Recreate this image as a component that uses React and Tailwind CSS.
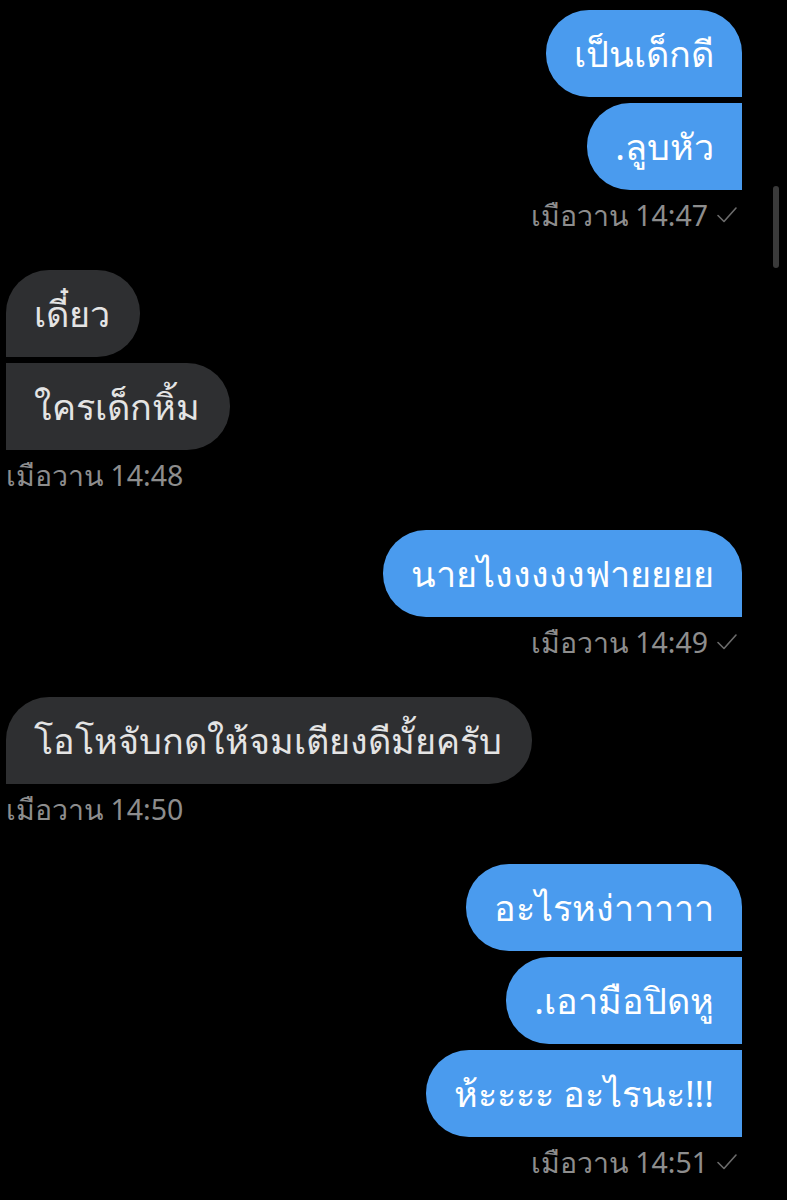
const groups = [
  { side: 'out', messages: ['เป็นเด็กดี', '.ลูบหัว'], time: 'เมือวาน 14:47' },
  { side: 'in', messages: ['เดี๋ยว', 'ใครเด็กหิ้ม'], time: 'เมือวาน 14:48' },
  { side: 'out', messages: ['นายไงงงงงฟายยยย'], time: 'เมือวาน 14:49' },
  { side: 'in', messages: ['โอโหจับกดให้จมเตียงดีมั้ยครับ'], time: 'เมือวาน 14:50' },
  { side: 'out', messages: ['อะไรหง่าาาาา', '.เอามือปิดหู', 'ห้ะะะะ อะไรนะ!!!'], time: 'เมือวาน 14:51' },
];

function Bubble({ side, text, first }) {
  // first bubble of a group keeps the rounded corner on the tail side
  const outShape = first ? 'rounded-l-[43px] rounded-tr-[43px]' : 'rounded-l-[43px]';
  const inShape = first ? 'rounded-r-[43px] rounded-tl-[43px]' : 'rounded-r-[43px]';
  return (
    <div
      className={
        side === 'out'
          ? `bg-[#4a9bee] text-white ${outShape} h-[87px] px-[28px] flex items-center`
          : `bg-[#2e2f31] text-[#e4e4e4] ${inShape} h-[87px] pl-[28px] pr-[30px] flex items-center`
      }
    >
      <span className="text-[36px] leading-none whitespace-nowrap">{text}</span>
    </div>
  );
}

function Check() {
  return (
    <svg width="22" height="18" viewBox="0 0 22 18" fill="none">
      <path d="M2 9.5 L8 15.5 L20 2" stroke="#6b6b6b" strokeWidth="1.6" strokeLinecap="round" strokeLinejoin="round" />
    </svg>
  );
}

export default function App() {
  return (
    <div
      className="relative bg-black min-h-[1200px] w-[787px] overflow-hidden pt-[10px]"
      style={{ fontFamily: '"Noto Sans", "DejaVu Sans", sans-serif' }}
    >
      {/* Scroll indicator */}
      <div className="absolute left-[773px] top-[186px] w-[6px] h-[82px] rounded-full bg-[#3a3a3a]" />

      <div className="flex flex-col gap-[39px]">
        {groups.map((g, i) => (
          <div key={i} className={g.side === 'out' ? 'flex flex-col items-end pr-[45px]' : 'flex flex-col items-start pl-[6px]'}>
            <div className={g.side === 'out' ? 'flex flex-col items-end gap-[6px]' : 'flex flex-col items-start gap-[6px]'}>
              {g.messages.map((m, j) => (
                <Bubble key={j} side={g.side} text={m} first={j === 0} />
              ))}
            </div>
            <div
              className={
                g.side === 'out'
                  ? 'mt-[9px] h-[32px] pr-[4px] flex items-center gap-[8px] text-[28.5px] text-[#8d8d8d] leading-none'
                  : 'mt-[9px] h-[32px] flex items-center text-[28.5px] text-[#8d8d8d] leading-none'
              }
            >
              <span>{g.time}</span>
              {g.side === 'out' && <Check />}
            </div>
          </div>
        ))}
      </div>
    </div>
  );
}
